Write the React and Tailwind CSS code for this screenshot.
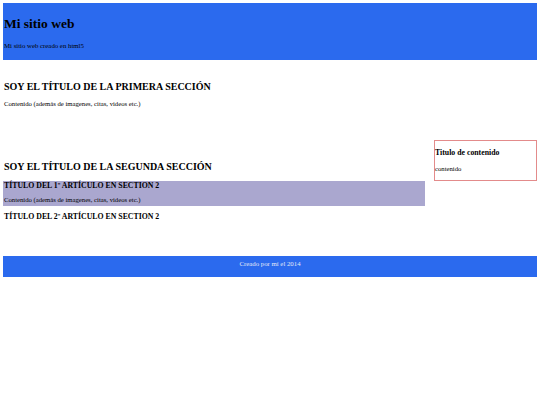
export default function App() {
  return (
    <div className="min-h-[405px] bg-white px-[3px] pt-[3px] font-['Liberation_Serif',serif] text-black">
      <header className="h-[57px] bg-[#2b6aee] pt-[14px] pl-[1px]">
        <h1 className="text-[13.5px] font-bold leading-[13px]">Mi sitio web</h1>
        <p className="mt-[12px] text-[6.8px] leading-[7px]">Mi sitio web creado en html5</p>
      </header>

      <div className="flex">
        <main className="w-[422px]">
          <section className="pl-[1px]">
            <h2 className="mt-[22px] text-[10px] font-bold leading-[10px]">
              SOY EL TÍTULO DE LA PRIMERA SECCIÓN
            </h2>
            <p className="mt-[8px] text-[6.7px] leading-[7px]">
              Contenido (además de imagenes, citas, videos etc.)
            </p>
          </section>

          <section>
            <h2 className="mt-[55px] pl-[1px] text-[10px] font-bold leading-[10px]">
              SOY EL TÍTULO DE LA SEGUNDA SECCIÓN
            </h2>
            <article className="mt-[9px] bg-[#aaa7cf] pt-[1px] pb-[3px] pl-[1px]">
              <h3 className="text-[7.8px] font-bold leading-[8px]">TÍTULO DEL 1º ARTÍCULO EN SECTION 2</h3>
              <p className="mt-[6px] text-[6.7px] leading-[7px]">
                Contenido (además de imagenes, citas, videos etc.)
              </p>
            </article>
            <article className="pl-[1px]">
              <h3 className="mt-[7px] text-[7.8px] font-bold leading-[8px]">TÍTULO DEL 2º ARTÍCULO EN SECTION 2</h3>
            </article>
          </section>
        </main>

        <aside className="ml-[9px] mt-[80px] h-[41px] flex-1 self-start border border-[#e38b8b] pt-[8px]">
          <h4 className="text-[7.8px] font-bold leading-[8px]">Titulo de contenido</h4>
          <p className="mt-[8px] text-[6.7px] leading-[7px]">contenido</p>
        </aside>
      </div>

      <footer className="mt-[35px] h-[21px] bg-[#2b6aee] pt-[4px] text-center text-[6.8px] leading-[7px] text-[#e4e9f6]">
        Creado por mí el 2014
      </footer>
    </div>
  );
}
